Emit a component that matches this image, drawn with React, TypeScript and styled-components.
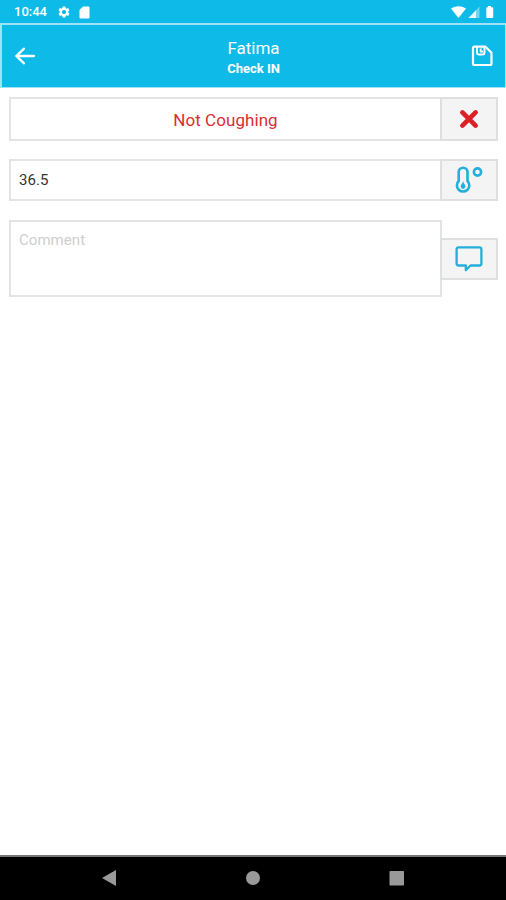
import React from "react";
import styled, { createGlobalStyle } from "styled-components";
import { MdSettings } from "react-icons/md";

const GlobalStyle = createGlobalStyle`
  * { box-sizing: border-box; }
  body { margin: 0; background: #fff; font-family: Roboto, sans-serif; }
`;

const Screen = styled.div`
  width: 506px;
  height: 900px;
  display: flex;
  flex-direction: column;
  background: #fff;
  overflow: hidden;
  svg { display: block; flex: none; }
`;

const StatusBar = styled.div`
  height: 23px;
  flex: none;
  display: flex;
  align-items: center;
  padding: 1px 12px 0 14px;
  background: #0ebbe8;
  color: #fff;
`;

const Clock = styled.span`
  width: 43px;
  font-size: 13px;
  line-height: 22px;
  font-weight: 500;
`;

const StatusIcons = styled.div<{ $end?: boolean }>`
  display: flex;
  align-items: center;
  gap: ${(p) => (p.$end ? 0 : "8px")};
  margin-left: ${(p) => (p.$end ? "auto" : "0")};
`;

const Header = styled.header`
  height: 65px;
  flex: none;
  display: grid;
  grid-template-columns: 60px 1fr 60px;
  align-items: center;
  background: #0ebbe8;
  border: solid #9fe2f8;
  border-width: 2px 1px 1px 2px;
  color: #fff;
`;

const HeaderButton = styled.button<{ $right?: boolean }>`
  height: 40px;
  display: flex;
  align-items: center;
  justify-content: ${(p) => (p.$right ? "flex-end" : "flex-start")};
  padding: 0 12px 0 12px;
  border: 0;
  background: none;
  color: inherit;
`;

const Titles = styled.div`
  display: flex;
  flex-direction: column;
  align-items: center;
  padding-top: 4px;
`;

const Title = styled.div`
  font-size: 17px;
  line-height: 21px;
`;

const Subtitle = styled.div`
  font-size: 13px;
  line-height: 19px;
  font-weight: 700;
`;

const Form = styled.main`
  flex: 1;
  display: flex;
  flex-direction: column;
  padding: 9px 8px 0 9px;
`;

const Row = styled.div<{ $gap: number }>`
  display: flex;
  align-items: center;
  margin-bottom: ${(p) => p.$gap}px;
`;

const Field = styled.div<{ $height: number; $kind?: "status" | "placeholder" }>`
  width: 433px;
  height: ${(p) => p.$height}px;
  display: flex;
  align-items: ${(p) => (p.$kind === "placeholder" ? "flex-start" : "center")};
  justify-content: ${(p) => (p.$kind === "status" ? "center" : "flex-start")};
  padding: ${(p) =>
    p.$kind === "placeholder" ? "8px 8px" : p.$kind === "status" ? "2px 8px 0" : "0 8px"};
  border: 2px solid #e3e5e5;
  background: #fff;
  color: ${(p) =>
    p.$kind === "status" ? "#dc2c32" : p.$kind === "placeholder" ? "#cecece" : "#333"};
  font-size: ${(p) => (p.$kind === "status" ? 17 : 15)}px;
  line-height: 20px;
  letter-spacing: ${(p) => (p.$kind === "status" ? 0.06 : 0.05)}px;
`;

const SideButton = styled.button<{ $height: number }>`
  width: 58px;
  height: ${(p) => p.$height}px;
  margin-left: -2px;
  padding: 0;
  display: flex;
  align-items: center;
  justify-content: center;
  border: 2px solid #dedfdf;
  background: #f4f4f4;
`;

const NavBar = styled.nav`
  height: 45px;
  flex: none;
  display: flex;
  justify-content: space-between;
  align-items: center;
  padding: 0 101px 2px 101px;
  border-top: 2px solid #777;
  background: #000;
`;

const SdCard = () => (
  <svg width="11" height="13" viewBox="0 0 11 13">
    <path fill="#fff" d="M4 .5h5.300q1.200 0 1.200 1.200v9.600q0 1.200-1.200 1.200H1.700Q.5 12.500.5 11.300V4z" />
  </svg>
);

const Connectivity = () => (
  <svg width="43" height="14" viewBox="0 0 43 14" fill="#fff">
    <path d="M0 3.600Q7.500-1.200 15 3.600L7.500 13z" />
    <path d="M17.500 13 28.500 1.500V13z" opacity=".4" />
    <path d="M17.500 13 25 5.200V13z" opacity=".85" />
    <path d="M37 1h3v1.200h1.300q.9 0 .9.900v9q0 .9-.9.900h-5.100q-.9 0-.9-.9v-9q0-.9.900-.9H37z" />
  </svg>
);

const BackArrow = () => (
  <svg width="22" height="18" viewBox="0 0 22 18" fill="none" stroke="#fff" strokeWidth="2.300" strokeLinecap="round" strokeLinejoin="round">
    <path d="M20 9H2.300M10 1.700 2.300 9l7.700 7.300" />
  </svg>
);

const SaveIcon = () => (
  <svg width="22" height="22" viewBox="0 0 22 22" fill="none" stroke="#fff" strokeWidth="2.200" strokeLinejoin="round">
    <path d="M3.500 1.700h11l6 6V18.500q0 1.500-1.500 1.500H3.500Q2 20 2 18.500V3.200q0-1.500 1.500-1.500z" />
    <path d="M6 2v5.500q0 2 2 2h3.500q2 0 2-2V2M9.700 3.500V6.600H12" strokeWidth="1.900" />
  </svg>
);

const CrossIcon = () => (
  <svg width="20" height="20" viewBox="0 0 20 20" stroke="#dc2027" strokeWidth="4.700" strokeLinecap="round">
    <path d="m3.400 3.400 13.200 13.200M16.600 3.400 3.400 16.600" />
  </svg>
);

const ThermometerIcon = () => (
  <svg width="28" height="28" viewBox="0 0 28 28" fill="none" stroke="#23afd9" strokeWidth="2.600">
    <path d="M3.700 15V6.100a4.400 4.400 0 0 1 8.800 0V15a6.200 6.200 0 1 1-8.800 0z" />
    <circle cx="22.500" cy="6" r="3.600" strokeWidth="2.600" />
    <path d="M8.100 15q.5 2.400 1.700 3.500a2.400 2.400 0 1 1-3.400 0q1.200-1.100 1.700-3.500z" fill="#23afd9" stroke="none" />
  </svg>
);

const CommentIcon = () => (
  <svg width="28" height="28" viewBox="0 0 28 28" fill="none" stroke="#23afd9" strokeWidth="2.300" strokeLinejoin="round">
    <path d="M3.600 2.300h20.800q2 0 2 2v14.200q0 2-2 2H15.500l-4.700 4.600v-4.600H3.600q-2 0-2-2V4.300q0-2 2-2z" />
  </svg>
);

const NavIcon = ({ kind }: { kind: "back" | "home" | "recent" }) => (
  <svg width="16" height="18" viewBox="0 0 16 18" fill="#999">
    {kind === "back" && <path d="M1 9 15 1v16z" />}
    {kind === "home" && <circle cx="8" cy="9" r="7" />}
    {kind === "recent" && <rect x=".5" y="2" width="14.500" height="14.500" rx=".7" />}
  </svg>
);

export default function App() {
  return (
    <Screen>
      <GlobalStyle />
      <StatusBar>
        <Clock>10:44</Clock>
        <StatusIcons>
          <MdSettings size={14} />
          <SdCard />
        </StatusIcons>
        <StatusIcons $end>
          <Connectivity />
        </StatusIcons>
      </StatusBar>
      <Header>
        <HeaderButton aria-label="Back"><BackArrow /></HeaderButton>
        <Titles>
          <Title>Fatima</Title>
          <Subtitle>Check IN</Subtitle>
        </Titles>
        <HeaderButton $right aria-label="Save"><SaveIcon /></HeaderButton>
      </Header>
      <Form>
        <Row $gap={18}>
          <Field $height={44} $kind="status">Not Coughing</Field>
          <SideButton $height={44} aria-label="Toggle coughing"><CrossIcon /></SideButton>
        </Row>
        <Row $gap={19}>
          <Field $height={42}>36.5</Field>
          <SideButton $height={42} aria-label="Temperature"><ThermometerIcon /></SideButton>
        </Row>
        <Row $gap={0}>
          <Field $height={77} $kind="placeholder">Comment</Field>
          <SideButton $height={42} aria-label="Add comment"><CommentIcon /></SideButton>
        </Row>
      </Form>
      <NavBar>
        <NavIcon kind="back" />
        <NavIcon kind="home" />
        <NavIcon kind="recent" />
      </NavBar>
    </Screen>
  );
}
